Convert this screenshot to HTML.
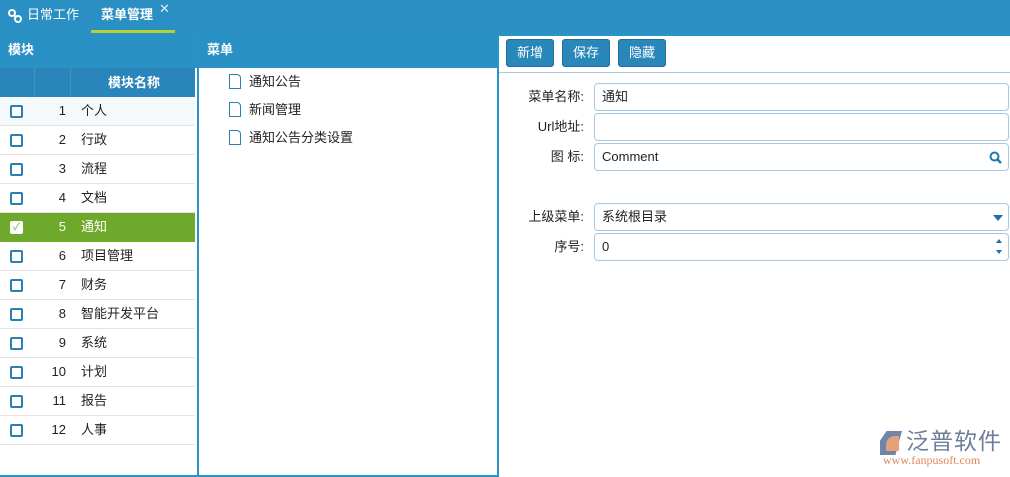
<!DOCTYPE html>
<html><head><meta charset="utf-8"><style>
*{box-sizing:border-box;margin:0;padding:0}
body{width:1010px;height:477px;overflow:hidden;background:#fff;font-family:"Liberation Sans","Noto Sans CJK SC",sans-serif;font-size:13px;color:#222;position:relative}
.top{position:absolute;left:0;top:0;width:1010px;height:33px;background:#2a8fc2}
.tab{position:absolute;top:0;line-height:30px;color:#fff;font-size:13px}
.ul{position:absolute;left:91px;top:30px;width:84px;height:3px;background:#b5d334}
.pane{position:absolute;top:33px;height:444px;border:2px solid #2a93c8;border-top:none}
.ph{height:35px;line-height:33px;background:#2a91c4;color:#fff;font-weight:bold;padding:0 0 0 8px;font-size:13px}
.gh{position:absolute;left:0;top:35px;width:195px;height:29px;background:#2a86ba;color:#fff;line-height:29px}
.row{position:absolute;left:0;width:195px;height:29px;border-bottom:1px solid #e4e4e4;font-size:13px;line-height:28px}
.cb{position:absolute;left:10px;top:8px;width:13px;height:13px;border:2px solid #2a7fb3;border-radius:2px;background:#fff}
.num{position:absolute;left:40px;width:26px;text-align:right;top:0}
.nm{position:absolute;left:81px;top:0}
.mi{position:absolute;left:30px;font-size:13px;line-height:18px}
.doc{position:absolute;left:0;top:1px;width:12px;height:15px;border:1px solid #2a7fb3;border-radius:0 4px 0 0;background:#fff}
.btn{position:absolute;top:6px;height:28px;line-height:26px;background:#2987ba;color:#fff;border-radius:3px;font-size:13px;text-align:center;border:1px solid #1f6f9e}
.lab{position:absolute;width:85px;text-align:right;font-size:13px;line-height:28px}
.inp{position:absolute;left:95px;width:415px;height:28px;border:1px solid #a8c8e0;border-radius:4px;padding:0 7px;font-size:13px;line-height:26px}
</style></head><body>
<div class="top">
<svg style="position:absolute;left:8px;top:9px" width="14" height="14" viewBox="0 0 14 14"><circle cx="4" cy="4" r="3" fill="none" stroke="#fff" stroke-width="2"/><circle cx="10" cy="10" r="3" fill="none" stroke="#fff" stroke-width="2"/><path d="M6 6 L8 8" stroke="#fff" stroke-width="2"/></svg>
<div class="tab" style="left:27px">日常工作</div>
<div class="tab" style="left:101px;font-weight:bold">菜单管理</div>
<div class="tab" style="left:159px;top:-6px;font-size:13px;color:#e0eef6">✕</div>
<div class="ul"></div>
</div>
<div class="pane" style="left:0;width:199px;border-left:none">
<div class="ph">模块</div>
<div class="gh"><div style="position:absolute;left:34px;top:0;width:1px;height:29px;background:#3c97c9"></div><div style="position:absolute;left:70px;top:0;width:1px;height:29px;background:#3c97c9"></div><div style="position:absolute;left:108px;top:0;font-weight:bold">模块名称</div></div>
<div class="row" style="top:64px;background:#f5f9fc"><div class="cb"></div><div class="num">1</div><div class="nm">个人</div></div>
<div class="row" style="top:93px"><div class="cb"></div><div class="num">2</div><div class="nm">行政</div></div>
<div class="row" style="top:122px"><div class="cb"></div><div class="num">3</div><div class="nm">流程</div></div>
<div class="row" style="top:151px"><div class="cb"></div><div class="num">4</div><div class="nm">文档</div></div>
<div class="row" style="top:180px;background:#6fa92b;color:#fff;border-color:#6fa92b"><div class="cb" style="border-color:#fff;background:#fff;color:#6fa92b;font-size:10px;line-height:9px;text-align:center">✓</div><div class="num">5</div><div class="nm">通知</div></div>
<div class="row" style="top:209px"><div class="cb"></div><div class="num">6</div><div class="nm">项目管理</div></div>
<div class="row" style="top:238px"><div class="cb"></div><div class="num">7</div><div class="nm">财务</div></div>
<div class="row" style="top:267px"><div class="cb"></div><div class="num">8</div><div class="nm">智能开发平台</div></div>
<div class="row" style="top:296px"><div class="cb"></div><div class="num">9</div><div class="nm">系统</div></div>
<div class="row" style="top:325px"><div class="cb"></div><div class="num">10</div><div class="nm">计划</div></div>
<div class="row" style="top:354px"><div class="cb"></div><div class="num">11</div><div class="nm">报告</div></div>
<div class="row" style="top:383px"><div class="cb"></div><div class="num">12</div><div class="nm">人事</div></div>
</div>
<div class="pane" style="left:197px;width:302px">
<div class="ph">菜单</div>
<div class="mi" style="top:40px"><div class="doc"></div><span style="margin-left:20px">通知公告</span></div>
<div class="mi" style="top:68px"><div class="doc"></div><span style="margin-left:20px">新闻管理</span></div>
<div class="mi" style="top:96px"><div class="doc"></div><span style="margin-left:20px">通知公告分类设置</span></div>
</div>
<div style="position:absolute;left:499px;top:33px;width:511px;height:444px">
<div style="position:absolute;left:0;top:0;width:511px;height:3px;background:#2a93c8"></div>
<div class="btn" style="left:7px;width:48px">新增</div>
<div class="btn" style="left:63px;width:48px">保存</div>
<div class="btn" style="left:119px;width:48px">隐藏</div>
<div style="position:absolute;left:0;top:39px;width:511px;height:1px;background:#a8c8e0"></div>
<div class="lab" style="top:50px">菜单名称:</div><div class="inp" style="top:50px">通知</div>
<div class="lab" style="top:80px">Url地址:</div><div class="inp" style="top:80px"></div>
<div class="lab" style="top:110px">图 标:</div><div class="inp" style="top:110px">Comment<svg style="position:absolute;right:6px;top:7px" width="13" height="13" viewBox="0 0 13 13"><circle cx="5.5" cy="5.5" r="4" fill="none" stroke="#1f78b0" stroke-width="2"/><path d="M8.5 8.5L12 12" stroke="#1f78b0" stroke-width="2.4"/></svg></div>
<div class="lab" style="top:170px">上级菜单:</div><div class="inp" style="top:170px">系统根目录<div style="position:absolute;right:5px;top:11px;border:5px solid transparent;border-top:6px solid #1f6fa8;border-bottom:none"></div></div>
<div class="lab" style="top:200px">序号:</div><div class="inp" style="top:200px">0<div style="position:absolute;right:6px;top:5px;border:3px solid transparent;border-bottom:4px solid #1f6fa8;border-top:none"></div><div style="position:absolute;right:6px;top:16px;border:3px solid transparent;border-top:4px solid #1f6fa8;border-bottom:none"></div></div>
</div>
<div style="position:absolute;left:880px;top:431px;width:22px;height:24px;background:#6f86a8;clip-path:polygon(30% 0,100% 0,70% 100%,0 100%,0 40%)"></div>
<div style="position:absolute;left:886px;top:436px;width:13px;height:15px;background:#e6a07a;border-radius:9px 0 0 0"></div>
<div style="position:absolute;left:906px;top:426px;font-size:23px;line-height:30px;color:#6f7f9a;letter-spacing:1px">泛普软件</div>
<div style="position:absolute;left:883px;top:453px;font-size:12px;line-height:14px;color:#e0875a;font-family:'Liberation Serif',serif">www.fanpusoft.com</div>
</body></html>
